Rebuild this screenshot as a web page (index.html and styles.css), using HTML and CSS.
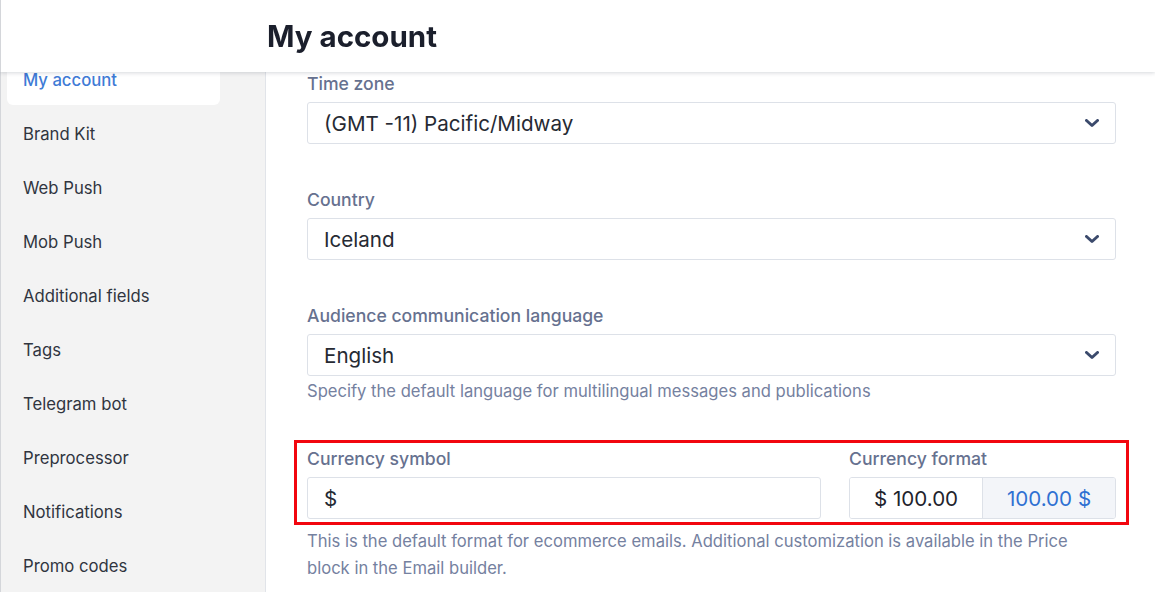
FILE: index.html
```html
<!DOCTYPE html>
<html lang="en">
<head>
<meta charset="utf-8">
<title>My account</title>
<link rel="stylesheet" href="styles.css">
</head>
<body>
<header class="topbar">
  <h1 class="topbar-title">My account</h1>
</header>
<div class="layout">
  <nav class="sidebar">
    <a class="nav-item is-active">My account</a>
    <a class="nav-item">Brand Kit</a>
    <a class="nav-item">Web Push</a>
    <a class="nav-item">Mob Push</a>
    <a class="nav-item">Additional fields</a>
    <a class="nav-item">Tags</a>
    <a class="nav-item">Telegram bot</a>
    <a class="nav-item">Preprocessor</a>
    <a class="nav-item">Notifications</a>
    <a class="nav-item">Promo codes</a>
  </nav>
  <main class="content">
    <div class="field">
      <label class="field-label">Time zone</label>
      <div class="select">
        <span class="select-value">(GMT -11) Pacific/Midway</span>
        <svg class="chevron" viewBox="0 0 14 9" width="14" height="9"><path d="M1.5 1.5 L7 6.5 L12.5 1.5" fill="none" stroke="currentColor" stroke-width="3" stroke-linecap="round" stroke-linejoin="round"/></svg>
      </div>
    </div>
    <div class="field">
      <label class="field-label">Country</label>
      <div class="select">
        <span class="select-value">Iceland</span>
        <svg class="chevron" viewBox="0 0 14 9" width="14" height="9"><path d="M1.5 1.5 L7 6.5 L12.5 1.5" fill="none" stroke="currentColor" stroke-width="3" stroke-linecap="round" stroke-linejoin="round"/></svg>
      </div>
    </div>
    <div class="field">
      <label class="field-label">Audience communication language</label>
      <div class="select">
        <span class="select-value">English</span>
        <svg class="chevron" viewBox="0 0 14 9" width="14" height="9"><path d="M1.5 1.5 L7 6.5 L12.5 1.5" fill="none" stroke="currentColor" stroke-width="3" stroke-linecap="round" stroke-linejoin="round"/></svg>
      </div>
      <p class="hint">Specify the default language for multilingual messages and publications</p>
    </div>
    <div class="field">
      <div class="currency-row">
        <div class="currency-symbol">
          <label class="field-label">Currency symbol</label>
          <div class="input"><span class="select-value">$</span></div>
        </div>
        <div class="currency-format">
          <label class="field-label">Currency format</label>
          <div class="segmented">
            <span class="segment">$ 100.00</span>
            <span class="segment is-selected">100.00 $</span>
          </div>
        </div>
      </div>
      <p class="hint hint-wide">This is the default format for ecommerce emails. Additional customization is available in the Price block in the Email builder.</p>
    </div>
  </main>
</div>
</body>
</html>
```
FILE: styles.css
```css
* {
  box-sizing: border-box;
}

html, body {
  margin: 0;
  height: 100%;
  overflow: hidden;
}

body {
  font-family: "Inter", "Noto Sans", sans-serif;
  background: #ffffff;
  border-left: 1px solid #d4d6da;
  color: #252a36;
}

.topbar {
  position: fixed;
  top: 0;
  left: 0;
  right: 0;
  height: 72px;
  background: #ffffff;
  border-left: 1px solid #d4d6da;
  box-shadow: 0 1px 4px rgba(30, 40, 60, 0.18);
  display: flex;
  align-items: center;
  padding-left: 266px;
  z-index: 2;
}

.topbar-title {
  margin: 0;
  font-size: 29.5px;
  font-weight: 700;
  color: #1b1f2c;
}

.layout {
  display: flex;
  height: 100%;
}

.sidebar {
  width: 265px;
  flex: none;
  background: #f3f3f3;
  border-right: 1px solid #e1e4e9;
  padding: 55px 45px 0 6px;
  display: flex;
  flex-direction: column;
  gap: 4px;
}

.nav-item {
  display: flex;
  align-items: center;
  height: 50px;
  padding-left: 16px;
  font-size: 16.7px;
  color: #30353f;
  border-radius: 6px;
  flex: none;
}

.nav-item.is-active {
  background: #ffffff;
  color: #3f7bd6;
  font-weight: 500;
}

.content {
  flex: 1;
  padding: 73px 39px 0 41px;
}

.field {
  margin-bottom: 45px;
}

.field-label {
  display: block;
  height: 21px;
  line-height: 21px;
  font-size: 17.6px;
  font-weight: 500;
  color: #66718f;
  margin-bottom: 8px;
}

.select,
.input {
  height: 42px;
  border: 1px solid #dde1e8;
  border-radius: 3px;
  display: flex;
  align-items: center;
  justify-content: space-between;
  padding: 0 16px 0 16px;
  background: #ffffff;
}

.select-value {
  font-size: 20.6px;
  color: #262a33;
}

.chevron {
  color: #3b4a6c;
  margin-top: 1px;
}

.hint {
  margin: 2px 0 -2px;
  font-size: 16.6px;
  line-height: 27px;
  color: #7581a0;
}

.hint-wide {
  margin-top: 9px;
  max-width: 790px;
}

.currency-row {
  position: relative;
  display: flex;
  gap: 28px;
}

/* highlight frame around the currency settings */
.currency-row::after {
  content: "";
  position: absolute;
  top: -8px;
  left: -13px;
  right: -13px;
  bottom: -6px;
  border: 3px solid #f2060f;
  pointer-events: none;
}

.currency-symbol {
  flex: 1;
}

.currency-format {
  width: 267px;
  flex: none;
}

.segmented {
  display: flex;
  height: 42px;
  border: 1px solid #dde1e8;
  border-radius: 3px;
  overflow: hidden;
}

.segment {
  flex: 1;
  display: flex;
  align-items: center;
  justify-content: center;
  font-size: 20.6px;
  color: #1f232c;
  background: #ffffff;
}

.segment.is-selected {
  background: #f3f5f9;
  color: #2f70d2;
  border-left: 1px solid #dde1e8;
}
```
